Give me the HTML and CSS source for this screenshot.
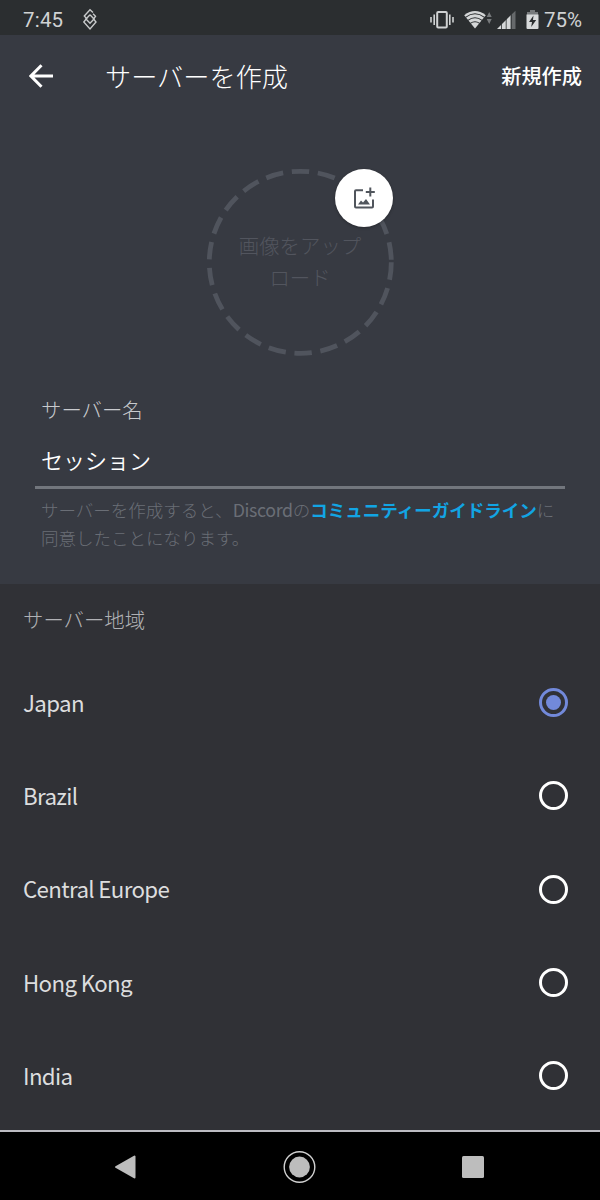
FILE: index.html
```
<!DOCTYPE html>
<html lang="ja">
<head>
<meta charset="utf-8">
<title>サーバーを作成</title>
<link rel="stylesheet" href="styles.css">
</head>
<body>
<div class="screen">
  <header class="status">
    <span class="clock">7:45</span>
    <svg class="app-mark" width="16" height="24" viewBox="0 0 16 24" fill="none" stroke="#c8cacb" stroke-width="1.400">
      <path d="M8 6.800 12 11 8 15.200 4 11 8 6.800"/>
      <path d="M11 4.600 8 1.800 2.300 8 4.600 10.500 1.800 14 8 21 14 14 11.500 11 13.500 8.300 11 5.800"/>
    </svg>
    <div class="indicators">
      <svg class="vibrate" width="24" height="20" viewBox="0 0 24 20" fill="none" stroke="#d0d2d3">
        <rect x="7.200" y="2" width="9.600" height="15.500" rx="1" stroke-width="2"/>
        <path d="M4.200 4.500v10.500M19.800 4.500v10.500" stroke-width="1.600"/>
        <path d="M1 7v5.500M23 7v5.500" stroke-width="1.600"/>
      </svg>
      <svg class="wifi" width="28" height="20" viewBox="0 0 28 20">
        <path d="M.2 5.200Q11 -3.200 21.800 5.200L11 18.500Z" fill="#d5d7d8"/>
        <path d="M1.500 7.400Q11 .2 20.500 7.400M3.900 10.400Q11 5.200 18.100 10.400M6.300 13.400Q11 10.200 15.700 13.400" fill="none" stroke="#2b2e30" stroke-width="1.100"/>
        <path d="M22.700 7 25.200 2l2.500 5zM22.700 9h5l-2.500 5z" fill="#777a7c"/>
      </svg>
      <svg class="cell" width="20" height="20" viewBox="0 0 20 20">
        <path d="M0 19 14 5v14z" fill="#d5d7d8"/>
        <path d="M14.500 4.500 18.500 .8V19h-4z" fill="#66696b"/>
        <path d="M4.500 12v7M9.200 8v11M14 3v16" stroke="#2b2e30" stroke-width=".8"/>
      </svg>
      <svg class="battery" width="13" height="20" viewBox="0 0 13 20">
        <path d="M4 0h5v2h3v3H1V2h3z" fill="#777a7c"/>
        <path d="M.5 4.500h12V18a1 1 0 0 1-1 1h-10a1 1 0 0 1-1-1z" fill="#d8dadb"/>
        <path d="M7.500 5.500 3 12h3l-.8 5 5-7H7z" fill="#2b2e30"/>
      </svg>
      <span class="percent">75%</span>
    </div>
  </header>

  <main class="create">
    <div class="toolbar">
      <svg class="back" width="24" height="24" viewBox="0 0 24 24" fill="none" stroke="#fff" stroke-width="3">
        <path d="M12.500 1.200 1.900 12l10.600 10.800M2 12h22"/>
      </svg>
      <h1 class="title">サーバーを作成</h1>
      <span class="submit">新規作成</span>
    </div>

    <div class="upload">
      <svg class="ring" width="188" height="188" viewBox="0 0 188 188">
        <circle cx="94.300" cy="94.300" r="91" fill="none" stroke="#50545d" stroke-width="4.800" stroke-dasharray="17.600 8.620"/>
      </svg>
      <p class="upload-text">画像をアップ<br>ロード</p>
      <div class="add-image">
        <svg width="22" height="22" viewBox="0 0 22 22" fill="none" stroke="#50555c" stroke-width="2">
          <path d="M10 3.200H3Q2 3.200 2 4.200V19.500Q2 20.500 3 20.500H19Q20 20.500 20 19.500V12.500M17.300 .5v9M12.800 5h9"/>
          <path d="M5 17.500 8 13.500l2 2 3-3.500 4 5.500z" fill="#50555c" stroke="none"/>
        </svg>
      </div>
    </div>

    <div class="form">
      <div class="label">サーバー名</div>
      <div class="field">セッション</div>
      <p class="note">サーバーを作成すると、<span class="brand">Discord</span>の<b class="link">コミュニティーガイドライン</b>に<br>同意したことになります。</p>
    </div>
  </main>

  <section class="regions">
    <h2 class="region-heading">サーバー地域</h2>
    <div class="region"><span class="name">Japan</span><i class="radio selected"></i></div>
    <div class="region"><span class="name">Brazil</span><i class="radio"></i></div>
    <div class="region"><span class="name">Central Europe</span><i class="radio"></i></div>
    <div class="region"><span class="name">Hong Kong</span><i class="radio"></i></div>
    <div class="region"><span class="name">India</span><i class="radio"></i></div>
  </section>

  <nav class="navbar">
    <svg width="22" height="26" viewBox="0 0 22 26"><path d="M2 13 20.500 2.500v21z" fill="#bdbdbd" stroke="#bdbdbd" stroke-width="2" stroke-linejoin="round"/></svg>
    <svg width="34" height="34" viewBox="0 0 34 34"><circle cx="17.500" cy="17" r="15.300" fill="none" stroke="#d0d0d0" stroke-width="1.400"/><circle cx="17.500" cy="17" r="10.400" fill="#bdbdbd"/></svg>
    <svg width="22" height="22" viewBox="0 0 22 22"><rect width="22" height="22" rx="1.500" fill="#bdbdbd"/></svg>
  </nav>
</div>
</body>
</html>
```
FILE: styles.css
```
* { box-sizing: border-box; }
body {
  margin: 0;
  background: #303136;
  font-family: "Noto Sans CJK JP", "Noto Sans", sans-serif;
  font-weight: 300;
}
h1, h2, p { margin: 0; font-weight: 300; }
svg { display: block; flex: none; }
.screen {
  width: 600px;
  height: 1200px;
  display: flex;
  flex-direction: column;
  overflow: hidden;
}
.status {
  height: 35px;
  flex: none;
  display: flex;
  align-items: center;
  padding: 4px 18px 0 23px;
  background: #2b2e30;
  color: #d0d2d3;
  font: 400 20.5px/30px Roboto, sans-serif;
}
.clock { width: 59px; letter-spacing: 0.2px; }
.indicators { display: flex; align-items: center; margin-left: auto; }
.wifi { margin-left: 10px; }
.cell { margin-left: 5px; }
.battery { margin-left: 9px; }
.percent { margin-left: 5px; }

.create { height: 549px; flex: none; background: #373a42; }
.toolbar { height: 82px; display: flex; align-items: center; padding: 0 18px 0 29px; }
.title { margin-left: 52px; padding-bottom: 1px; font-size: 26.2px; line-height: 40px; color: #fff; }
.submit { margin-left: auto; padding-bottom: 1px; font-size: 20.2px; font-weight: 500; color: #fff; }
.upload {
  position: relative;
  width: 188px;
  height: 188px;
  margin: 51px auto 0 206px;
}
.upload-text {
  position: absolute;
  inset: 61px 0 auto;
  text-align: center;
  font-size: 20.4px;
  line-height: 32px;
  color: #52555e;
}
.add-image {
  position: absolute;
  top: 1px;
  left: 129px;
  width: 58px;
  height: 58px;
  border-radius: 50%;
  background: #fff;
  display: grid;
  place-items: center;
  box-shadow: 0 1px 3px rgba(0, 0, 0, .3);
}
.form { padding: 38px 35px 0; }
.label { padding-left: 6px; font-size: 20.4px; line-height: 30px; color: #c8cace; }
.field {
  height: 65px;
  padding: 19px 6px 0;
  border-bottom: 3px solid #72767d;
  font-size: 22px;
  font-weight: 350;
  line-height: 32px;
  color: #fff;
}
.note { padding: 6px 0 0 6px; font-size: 17.5px; line-height: 28px; color: #6a6e76; white-space: nowrap; }
.brand { font-weight: 400; font-size: 17.8px; letter-spacing: -0.35px; }
.link { color: #12a5e4; font-weight: 700; }

.regions { height: 546px; flex: none; background: #303136; }
.region-heading { height: 72px; padding: 20px 23px 0; font-size: 20.4px; line-height: 30px; color: #b0b1b5; }
.region {
  height: 93.3px;
  display: flex;
  align-items: center;
  justify-content: space-between;
  padding: 0 32px 0 23px;
  font-size: 22.3px;
  font-weight: 400;
  letter-spacing: -0.65px;
  color: #dcddde;
}
.name { padding-bottom: 2px; }
.radio {
  width: 29px;
  height: 29px;
  border: 3px solid #fff;
  border-radius: 50%;
  display: grid;
  place-items: center;
}
.selected { border-color: #7289da; }
.selected::after { content: ""; width: 15px; height: 15px; border-radius: 50%; background: #7289da; }

.navbar {
  height: 70px;
  flex: none;
  display: flex;
  align-items: center;
  justify-content: space-between;
  padding: 2px 116px 0 114px;
  border-top: 2px solid #bdbcc3;
  background: #000;
}
```
